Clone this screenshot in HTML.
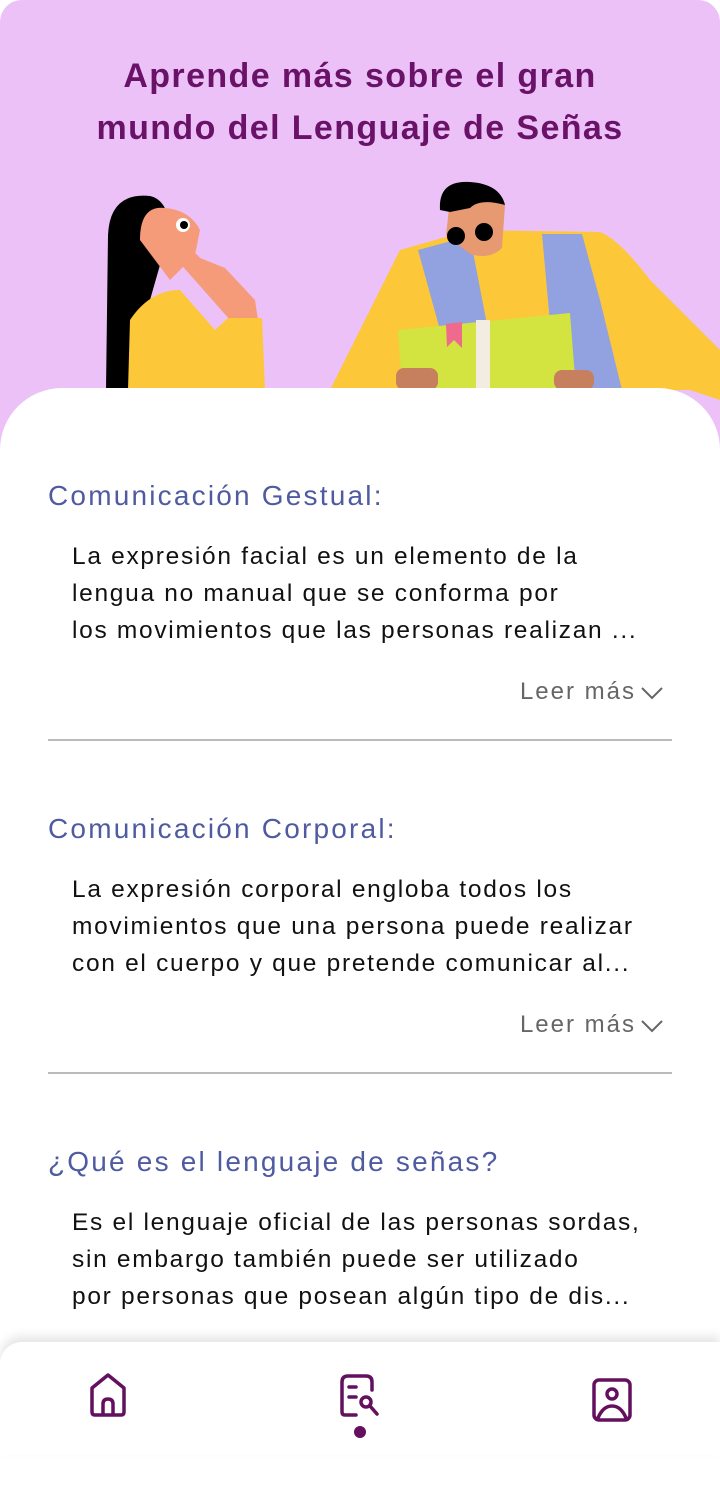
<!DOCTYPE html>
<html><head><meta charset="utf-8"><style>
*{margin:0;padding:0;box-sizing:border-box}
body{width:720px;height:1455px;overflow:hidden;background:#fff;font-family:"Liberation Sans",sans-serif;position:relative}
.hero{position:absolute;left:0;top:0;width:720px;height:460px;background:#ecc1f8;border-radius:22px 22px 0 0}
h1{position:absolute;top:50px;left:0;width:720px;text-align:center;color:#6a1268;font-size:34px;line-height:52px;font-weight:bold;letter-spacing:1.4px}
.card{position:absolute;left:0;top:388px;width:720px;height:1100px;background:#fff;border-radius:62px 62px 0 0}
.sec{position:absolute;left:48px;width:624px}
.sec h2{color:#4f5ba0;font-size:28px;font-weight:normal;line-height:32px;letter-spacing:2.2px}
.sec p{margin-left:24px;margin-top:26px;font-size:24.5px;line-height:37px;color:#111;white-space:nowrap;letter-spacing:1.7px}
.more{text-align:right;margin-right:8px;margin-top:27px;color:#666;font-size:24px;line-height:32px;letter-spacing:2px}
.more svg{vertical-align:middle;margin-left:4px}
hr{border:0;border-top:2px solid #bbb;margin-top:31px}
.nav{position:absolute;left:0;top:1342px;width:720px;height:113px;background:#fff;border-radius:22px 0 0 0;box-shadow:0 -6px 10px rgba(0,0,0,.1)}
</style></head><body>
<div class="hero">
<svg width="720" height="460" style="position:absolute;left:0;top:0">
<path d="M108 235 Q110 192 150 196 Q168 200 170 230 L150 300 L130 390 L106 390 Z" fill="#000"/>
<path d="M140 240 Q140 205 165 208 Q190 210 200 230 L195 255 L170 280 Z" fill="#f59b7a"/>
<circle cx="183" cy="225" r="7" fill="#fff"/><circle cx="184" cy="225" r="4" fill="#000"/>
<path d="M170 252 Q185 240 200 258 L225 268 L255 300 L258 320 L230 320 Z" fill="#f59b7a"/>
<path d="M130 320 Q150 290 180 290 L215 330 L228 318 L262 318 L265 390 L128 390 Z" fill="#fcc83a"/>
<path d="M330 390 L400 250 L470 230 L600 232 Q620 240 650 280 L720 350 L720 400 L690 390 Z" fill="#fcc83a"/>
<path d="M418 250 L470 236 L488 330 L440 330 Z" fill="#92a1e0"/>
<path d="M542 234 L582 234 L600 300 L622 390 L556 390 Z" fill="#92a1e0"/>
<path d="M450 200 Q470 185 505 205 L502 248 Q490 260 470 254 L446 235 Z" fill="#e79a71"/>
<path d="M440 210 Q438 180 470 182 Q500 184 505 205 Q480 198 470 208 L450 212 Z" fill="#000"/>
<circle cx="456" cy="236" r="9" fill="#000"/><circle cx="484" cy="232" r="9" fill="#000"/>
<path d="M398 330 L570 313 L576 390 L402 390 Z" fill="#d3e33f"/>
<rect x="476" y="320" width="14" height="70" fill="#f2ece1"/>
<path d="M446 324 L462 322 L462 348 L454 340 L447 347 Z" fill="#ee6b8d"/>
<rect x="396" y="368" width="42" height="22" rx="8" fill="#c7805e"/>
<rect x="554" y="370" width="40" height="20" rx="8" fill="#c7805e"/>
</svg>
<h1>Aprende más sobre el gran<br>mundo del Lenguaje de Señas</h1>
</div>
<div class="card"></div>
<div class="sec" style="top:480px"><h2>Comunicación Gestual:</h2>
<p>La expresión facial es un elemento de la<br>lengua no manual que se conforma por<br>los movimientos que las personas realizan ...</p>
<div class="more">Leer más<svg width="24" height="14" viewBox="0 0 24 14"><path d="M2 2 L12 12 L22 2" fill="none" stroke="#666" stroke-width="2"/></svg></div><hr></div>
<div class="sec" style="top:813px"><h2>Comunicación Corporal:</h2>
<p>La expresión corporal engloba todos los<br>movimientos que una persona puede realizar<br>con el cuerpo y que pretende comunicar al...</p>
<div class="more">Leer más<svg width="24" height="14" viewBox="0 0 24 14"><path d="M2 2 L12 12 L22 2" fill="none" stroke="#666" stroke-width="2"/></svg></div><hr></div>
<div class="sec" style="top:1146px"><h2>¿Qué es el lenguaje de señas?</h2>
<p>Es el lenguaje oficial de las personas sordas,<br>sin embargo también puede ser utilizado<br>por personas que posean algún tipo de dis...</p></div>
<div class="nav">
<svg width="720" height="113" style="position:absolute;left:0;top:0" fill="none" stroke="#63105f" stroke-width="3.5" stroke-linecap="round" stroke-linejoin="round">
<path d="M92 46 L108 33 L124 46 L124 70 Q124 73 121 73 L95 73 Q92 73 92 70 Z"/><path d="M103 72 L103 62 Q103 57 108 57 Q113 57 113 62 L113 72"/>
<path d="M372 48 L372 40 Q372 34 366 34 L348 34 Q342 34 342 40 L342 70 Q342 73 345 73 L356 73"/><path d="M349 45 L356 45 M349 55 L356 55"/><circle cx="366" cy="60" r="5"/><path d="M370 64 L377 72"/>
<rect x="594" y="38" width="36" height="40" rx="5"/><circle cx="612" cy="52" r="5"/><path d="M598 76 Q603 64 612 64 Q621 64 626 76"/>
</svg>
<div style="position:absolute;left:354px;top:84px;width:12px;height:12px;border-radius:50%;background:#63105f"></div>
</div>
</body></html>
